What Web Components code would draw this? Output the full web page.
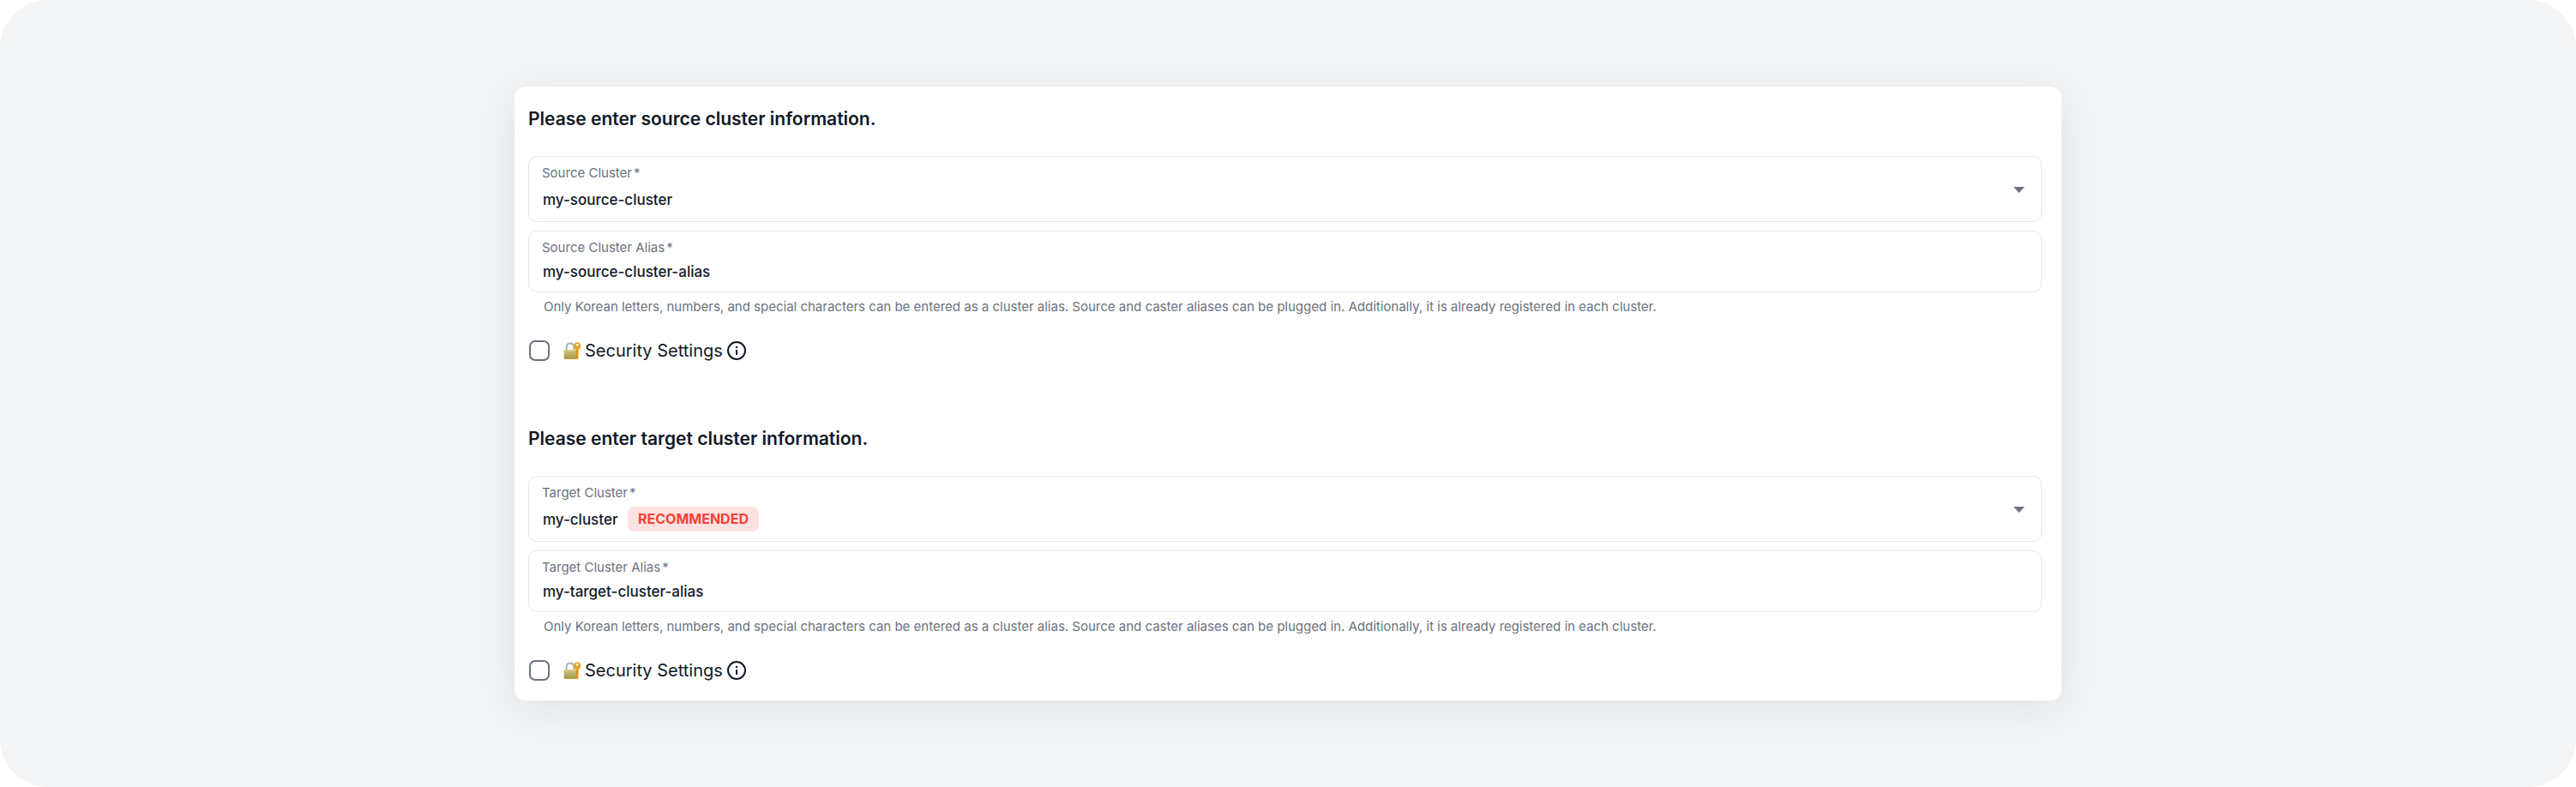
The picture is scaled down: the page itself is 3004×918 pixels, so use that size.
<!DOCTYPE html>
<html lang="en">
<head>
<meta charset="UTF-8">
<meta name="viewport" content="width=device-width, initial-scale=1">
<title>Cluster information</title>
<style>
  body {
    margin: 0;
    background: #fff;
    color: #111827;
    font-family: Inter, "Liberation Sans", sans-serif;
  }
</style>
</head>
<body>
<cluster-page>
  <cluster-section heading="Please enter source cluster information.">
    <select-field label="Source Cluster" value="my-source-cluster"></select-field>
    <text-field label="Source Cluster Alias" value="my-source-cluster-alias">
      Only Korean letters, numbers, and special characters can be entered as a cluster alias. Source and caster aliases can be plugged in. Additionally, it is already registered in each cluster.
    </text-field>
    <security-option></security-option>
  </cluster-section>
  <cluster-section heading="Please enter target cluster information.">
    <select-field label="Target Cluster" value="my-cluster">
      <status-badge>RECOMMENDED</status-badge>
    </select-field>
    <text-field label="Target Cluster Alias" value="my-target-cluster-alias">
      Only Korean letters, numbers, and special characters can be entered as a cluster alias. Source and caster aliases can be plugged in. Additionally, it is already registered in each cluster.
    </text-field>
    <security-option></security-option>
  </cluster-section>
</cluster-page>

<script>
// Shared by both field types
const fieldStyles = `
  :host {
    display: block;
  }
  .field {
    display: flex;
    align-items: center;
    box-sizing: border-box;
    padding: 9px 15px 11px;
    border: 1px solid #e5e7eb;
    border-radius: 10px;
  }
  .body {
    flex: 1;
    min-width: 0;
    display: flex;
    flex-direction: column;
    gap: 6px;
  }
  label {
    color: #6b7280;
    font-size: 15px;
    line-height: 20px;
  }
  label span {
    margin-left: 2px;
  }
  select,
  input {
    appearance: none;
    margin: 0;
    padding: 0 0 0 1px;
    border: 0;
    outline: 0;
    background: none;
    color: #111827;
    font: 500 17px/24px Inter, "Liberation Sans", sans-serif;
  }
`;

class ClusterPage extends HTMLElement {
  connectedCallback() {
    this.attachShadow({ mode: 'open' });
    this.shadowRoot.innerHTML = `
      <style>
        :host {
          display: block;
          box-sizing: border-box;
          min-height: 100vh;
          padding: 101px 24px;
          background: #f3f4f6;
          border-radius: 56px;
        }
        form {
          display: flex;
          flex-direction: column;
          gap: 72px;
          box-sizing: border-box;
          max-width: 1804px;
          margin: 0 auto;
          padding: 23px 23px 19px 16px;
          background: #fff;
          border-radius: 13px;
          box-shadow: 0 10px 50px rgba(0, 0, 0, 0.08);
        }
      </style>
      <form><slot></slot></form>
    `;
  }
}

class ClusterSection extends HTMLElement {
  connectedCallback() {
    this.attachShadow({ mode: 'open' });
    this.shadowRoot.innerHTML = `
      <style>
        :host {
          display: block;
        }
        h2 {
          margin: 0 0 28px;
          font-size: 21px;
          font-weight: 600;
          line-height: 30px;
        }
        .fields {
          display: flex;
          flex-direction: column;
          gap: 10px;
        }
      </style>
      <h2>${this.getAttribute('heading')}</h2>
      <div class="fields"><slot></slot></div>
    `;
  }
}

class SelectField extends HTMLElement {
  connectedCallback() {
    const value = this.getAttribute('value');
    this.attachShadow({ mode: 'open' });
    this.shadowRoot.innerHTML = `
      <style>
        ${fieldStyles}
        .value {
          display: flex;
          align-items: center;
          gap: 11px;
          height: 29px;
        }
        .caret {
          width: 20px;
          height: 20px;
          fill: #6b7280;
        }
      </style>
      <div class="field">
        <div class="body">
          <label for="control">${this.getAttribute('label')}<span>*</span></label>
          <div class="value">
            <select id="control"><option>${value}</option></select>
            <slot></slot>
          </div>
        </div>
        <svg class="caret" viewBox="0 0 20 20" aria-hidden="true"><path d="M3 8h13l-6.500 7z"/></svg>
      </div>
    `;
  }
}

class TextField extends HTMLElement {
  connectedCallback() {
    this.attachShadow({ mode: 'open' });
    this.shadowRoot.innerHTML = `
      <style>
        ${fieldStyles}
        input {
          width: 100%;
          height: 24px;
          box-sizing: border-box;
        }
        p {
          margin: 7px 18px 0;
          color: #6b7280;
          font-size: 15px;
          line-height: 20px;
        }
      </style>
      <div class="field">
        <div class="body">
          <label for="control">${this.getAttribute('label')}<span>*</span></label>
          <input id="control" type="text" required aria-describedby="hint" value="${this.getAttribute('value')}">
        </div>
      </div>
      <p id="hint"><slot></slot></p>
    `;
  }
}

class StatusBadge extends HTMLElement {
  connectedCallback() {
    this.attachShadow({ mode: 'open' });
    this.shadowRoot.innerHTML = `
      <style>
        :host {
          display: block;
          padding: 0 12px;
          border-radius: 8px;
          background: #fee2e2;
          color: #f44336;
          font-size: 16px;
          font-weight: 700;
          line-height: 29px;
        }
      </style>
      <slot></slot>
    `;
  }
}

class SecurityOption extends HTMLElement {
  connectedCallback() {
    this.attachShadow({ mode: 'open' });
    this.shadowRoot.innerHTML = `
      <style>
        :host {
          display: flex;
          align-items: center;
          gap: 5px;
          height: 32px;
          margin-top: 15px;
        }
        label {
          display: flex;
          align-items: center;
          font-size: 20px;
          line-height: 32px;
        }
        input {
          appearance: none;
          box-sizing: border-box;
          width: 24px;
          height: 24px;
          margin: 0 16px 0 1px;
          border: 2px solid #6b7280;
          border-radius: 7px;
          background: #fff;
        }
        input:checked {
          background: #6b7280;
        }
        .lock {
          width: 21px;
          height: 21px;
          margin-right: 4px;
        }
        button {
          display: flex;
          padding: 0;
          border: 0;
          background: none;
          color: #111827;
        }
        button svg {
          width: 22px;
          height: 22px;
        }
      </style>
      <label>
        <input type="checkbox">
        <svg class="lock" viewBox="0 0 21 21" aria-hidden="true">
          <defs>
            <linearGradient id="brass" x1="0" x2="0" y1="0" y2="1">
              <stop offset="0" stop-color="#cfc57a"/>
              <stop offset="1" stop-color="#9f954e"/>
            </linearGradient>
          </defs>
          <path d="M3.600 10V6.500C3.600 3 5.500 1.500 8 1.500s4.300 1.500 4.300 5V10" fill="none" stroke="#a5afb7" stroke-width="2"/>
          <rect x=".7" y="9" width="14.300" height="11" rx="1.200" fill="url(#brass)"/>
          <path d="M1.500 10h12" stroke="#e0d898" stroke-width=".8"/>
          <path d="M1 19.300h13.500" stroke="#c99c2d" stroke-width="1"/>
          <path fill="#e8a62b" fill-rule="evenodd" d="M16.200.3a4.300 4.300 0 0 0-1.700 8.200V18.800l1.600 1.800 1.800-1.600-.7-1.500.7-1.200-.7-1.300.7-1.200V8.500A4.300 4.300 0 0 0 16.200.3zm0 1.700a1.300 1.300 0 1 1 0 2.600 1.300 1.300 0 0 1 0-2.600z"/>
          <path d="M15.600 9v10" stroke="#c97f18" stroke-width=".7"/>
        </svg>
        Security Settings
      </label>
      <button type="button" aria-label="About security settings">
        <svg viewBox="0 0 22 22" fill="none" stroke="currentColor" stroke-width="2" aria-hidden="true">
          <circle cx="11" cy="11" r="10"/>
          <path d="M11 10v6"/>
          <path d="M10 10.500h1" stroke-width="1"/>
          <circle cx="11" cy="7" r="1.200" fill="currentColor" stroke="none"/>
        </svg>
      </button>
    `;
  }
}

customElements.define('cluster-page', ClusterPage);
customElements.define('cluster-section', ClusterSection);
customElements.define('select-field', SelectField);
customElements.define('text-field', TextField);
customElements.define('status-badge', StatusBadge);
customElements.define('security-option', SecurityOption);
</script>
</body>
</html>
